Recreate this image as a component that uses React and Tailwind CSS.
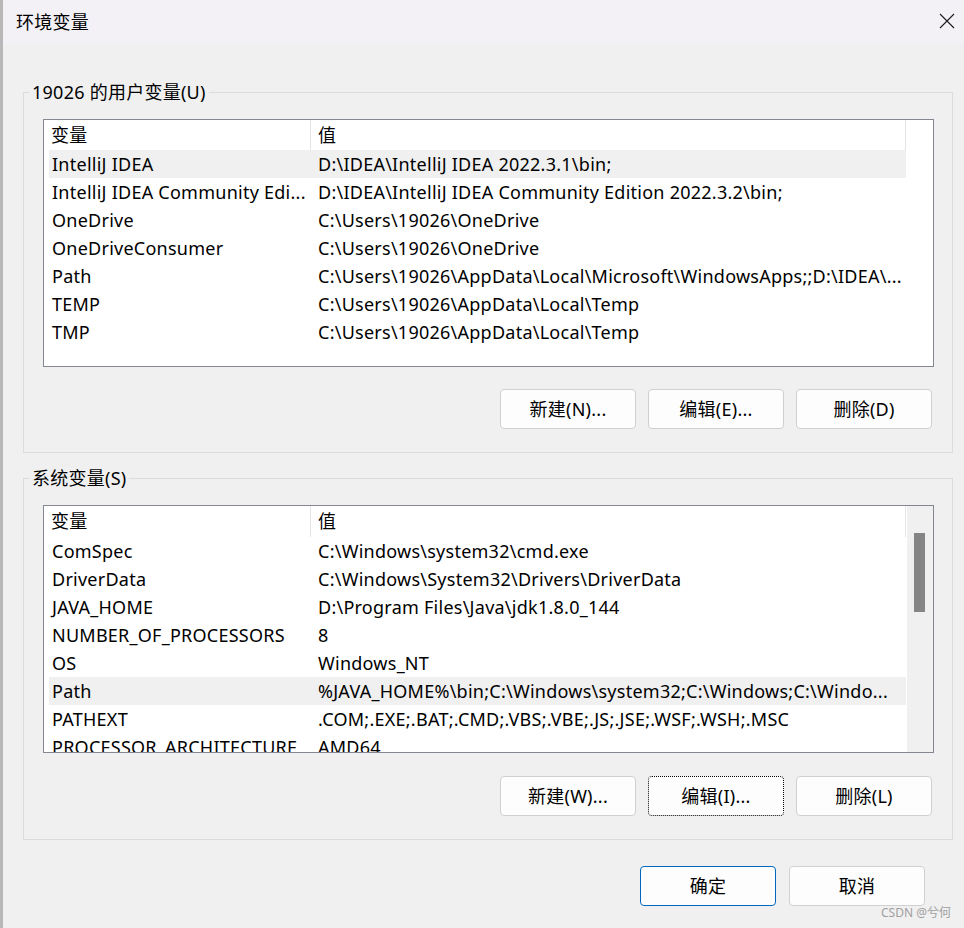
import React from "react"

const userVars = [
    ["IntelliJ IDEA", "D:\\IDEA\\IntelliJ IDEA 2022.3.1\\bin;"],
    ["IntelliJ IDEA Community Edi...", "D:\\IDEA\\IntelliJ IDEA Community Edition 2022.3.2\\bin;"],
    ["OneDrive", "C:\\Users\\19026\\OneDrive"],
    ["OneDriveConsumer", "C:\\Users\\19026\\OneDrive"],
    ["Path", "C:\\Users\\19026\\AppData\\Local\\Microsoft\\WindowsApps;;D:\\IDEA\\..."],
    ["TEMP", "C:\\Users\\19026\\AppData\\Local\\Temp"],
    ["TMP", "C:\\Users\\19026\\AppData\\Local\\Temp"],
]

const sysVars = [
    ["ComSpec", "C:\\Windows\\system32\\cmd.exe"],
    ["DriverData", "C:\\Windows\\System32\\Drivers\\DriverData"],
    ["JAVA_HOME", "D:\\Program Files\\Java\\jdk1.8.0_144"],
    ["NUMBER_OF_PROCESSORS", "8"],
    ["OS", "Windows_NT"],
    ["Path", "%JAVA_HOME%\\bin;C:\\Windows\\system32;C:\\Windows;C:\\Windo..."],
    ["PATHEXT", ".COM;.EXE;.BAT;.CMD;.VBS;.VBE;.JS;.JSE;.WSF;.WSH;.MSC"],
    ["PROCESSOR_ARCHITECTURE", "AMD64"],
]

const VarTable = ({ rows, selected, scroll, headH }) => {
    return (
        <div className="ml-[19px] w-[891px] h-[248px] border border-[#828790] bg-white flex overflow-hidden">
            <div className="w-[862px] flex flex-col shrink-0">
                <div className={`${headH} flex shrink-0`}>
                    <div className="w-[267px] h-full pl-[7px] border-r border-[#e5e5e5] flex items-center">变量</div>
                    <div className="flex-1 h-full pl-[7px] border-r border-[#e5e5e5] flex items-center">值</div>
                </div>
                {rows.map((row, i) => (
                    <div
                        key={i}
                        className={`ml-[5px] w-[857px] h-[28px] shrink-0 flex items-center whitespace-nowrap ${i === selected ? "bg-[#f0f0f0]" : ""}`}
                    >
                        <div className="w-[269px] pl-[3px] overflow-hidden">{row[0]}</div>
                        <div className="flex-1 overflow-hidden">{row[1]}</div>
                    </div>
                ))}
            </div>
            {scroll && (
                <div className="ml-auto w-[26px] h-full bg-[#f0f0f0] pt-[27px] pl-[7px]">
                    <div className="w-[11px] h-[79px] bg-[#858585]" />
                </div>
            )}
        </div>
    )
}

const Btn = ({ children, focus, primary }) => (
    <button
        className={`w-[136px] h-[40px] rounded-[4px] bg-[#fdfdfd] flex items-center justify-center border ${
            primary ? "border-[#0067c0]" : focus ? "border-dotted border-black" : "border-[#d0d0d0]"
        }`}
    >
        {children}
    </button>
)

const Group = ({ title, rows, selected, scroll, buttons, btnTop, headH }) => (
    <fieldset className="ml-[20px] w-[930px] border border-[#dcdcdc] p-0 m-0">
        <legend className="ml-[5px] px-[3px] leading-[24px]">{title}</legend>
        <div className="pt-[15px] pb-[23px]">
            <VarTable rows={rows} selected={selected} scroll={scroll} headH={headH} />
            <div className={`flex justify-end gap-[12px] pr-[20px] ${btnTop}`}>
                {buttons.map((b, i) => (
                    <Btn key={i} focus={b.focus}>{b.label}</Btn>
                ))}
            </div>
        </div>
    </fieldset>
)

export default function App() {
    return (
        <div className="w-[964px] h-[928px] flex bg-[#f0f0f0] text-[18px] tracking-[0.25px] text-black font-['Noto_Sans','Noto_Sans_CJK_SC',sans-serif] relative overflow-hidden">
            <div className="w-[3px] h-full bg-[#b8b8b8] shrink-0" />
            <div className="flex-1 flex flex-col">
                <div className="h-[43px] bg-[#f3f0f6] flex items-center justify-between pl-[13px] pr-[9px] shrink-0">
                    <span className="leading-none">环境变量</span>
                    <svg width="16" height="16" viewBox="0 0 16 16" className="mb-[1px]">
                        <path d="M1 1 L15 15 M15 1 L1 15" stroke="#1b1b1b" strokeWidth="1.1" fill="none" />
                    </svg>
                </div>
                <div className="mt-[37px]">
                    <Group
                        title="19026 的用户变量(U)"
                        rows={userVars}
                        selected={0}
                        headH="h-[30px]"
                        btnTop="mt-[22px]"
                        buttons={[{ label: "新建(N)..." }, { label: "编辑(E)..." }, { label: "删除(D)" }]}
                    />
                </div>
                <div className="mt-[13px]">
                    <Group
                        title="系统变量(S)"
                        rows={sysVars}
                        selected={5}
                        scroll
                        headH="h-[31px]"
                        btnTop="mt-[23px]"
                        buttons={[{ label: "新建(W)..." }, { label: "编辑(I)...", focus: true }, { label: "删除(L)" }]}
                    />
                </div>
                <div className="mt-[26px] flex justify-end gap-[13px] pr-[39px]">
                    <Btn primary>确定</Btn>
                    <Btn>取消</Btn>
                </div>
            </div>
            <div className="absolute left-[881px] top-[905px] text-[12px] tracking-normal text-[#a0a0a0] leading-[16px]">CSDN @兮何</div>
        </div>
    )
}
